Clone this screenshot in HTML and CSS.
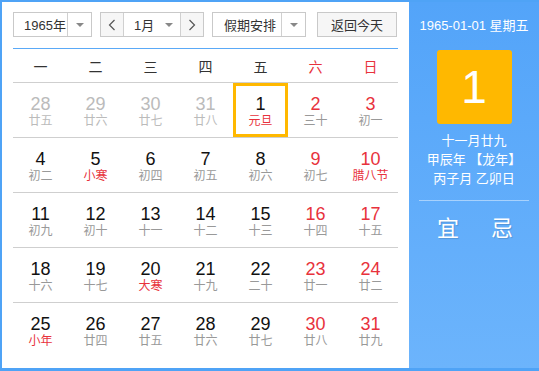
FILE: index.html
```html
<!DOCTYPE html>
<html lang="zh-CN">
<head>
<meta charset="utf-8">
<title>万年历</title>
<link rel="stylesheet" href="styles.css">
</head>
<body>
<div class="app">
  <div class="main">
    <div class="toolbar">
      <div class="select year">
        <span class="sel-text">1965年</span>
        <span class="sel-arrow divided"><i class="tri"></i></span>
      </div>
      <div class="month-group">
        <span class="nav-btn"><svg width="8" height="12" viewBox="0 0 8 12"><path d="M6.5 1 L1.5 6 L6.5 11" fill="none" stroke="#555" stroke-width="1.2"/></svg></span>
        <span class="month-sel"><span class="sel-text">1月</span><span class="sel-arrow"><i class="tri"></i></span></span>
        <span class="nav-btn"><svg width="8" height="12" viewBox="0 0 8 12"><path d="M1.5 1 L6.5 6 L1.5 11" fill="none" stroke="#555" stroke-width="1.2"/></svg></span>
      </div>
      <div class="select holiday">
        <span class="sel-text">假期安排</span>
        <span class="sel-arrow divided"><i class="tri"></i></span>
      </div>
      <div class="today-btn">返回今天</div>
    </div>
    <div class="weekdays">
      <span>一</span><span>二</span><span>三</span><span>四</span><span>五</span><span class="red">六</span><span class="red">日</span>
    </div>
    <div class="week">
      <div class="day other"><b>28</b><em>廿五</em></div>
      <div class="day other"><b>29</b><em>廿六</em></div>
      <div class="day other"><b>30</b><em>廿七</em></div>
      <div class="day other"><b>31</b><em>廿八</em></div>
      <div class="day today"><b>1</b><em class="fest">元旦</em></div>
      <div class="day wk"><b>2</b><em>三十</em></div>
      <div class="day wk"><b>3</b><em>初一</em></div>
    </div>
    <div class="week">
      <div class="day"><b>4</b><em>初二</em></div>
      <div class="day"><b>5</b><em class="fest">小寒</em></div>
      <div class="day"><b>6</b><em>初四</em></div>
      <div class="day"><b>7</b><em>初五</em></div>
      <div class="day"><b>8</b><em>初六</em></div>
      <div class="day wk"><b>9</b><em>初七</em></div>
      <div class="day wk"><b>10</b><em class="fest">腊八节</em></div>
    </div>
    <div class="week">
      <div class="day"><b>11</b><em>初九</em></div>
      <div class="day"><b>12</b><em>初十</em></div>
      <div class="day"><b>13</b><em>十一</em></div>
      <div class="day"><b>14</b><em>十二</em></div>
      <div class="day"><b>15</b><em>十三</em></div>
      <div class="day wk"><b>16</b><em>十四</em></div>
      <div class="day wk"><b>17</b><em>十五</em></div>
    </div>
    <div class="week">
      <div class="day"><b>18</b><em>十六</em></div>
      <div class="day"><b>19</b><em>十七</em></div>
      <div class="day"><b>20</b><em class="fest">大寒</em></div>
      <div class="day"><b>21</b><em>十九</em></div>
      <div class="day"><b>22</b><em>二十</em></div>
      <div class="day wk"><b>23</b><em>廿一</em></div>
      <div class="day wk"><b>24</b><em>廿二</em></div>
    </div>
    <div class="week last">
      <div class="day"><b>25</b><em class="fest">小年</em></div>
      <div class="day"><b>26</b><em>廿四</em></div>
      <div class="day"><b>27</b><em>廿五</em></div>
      <div class="day"><b>28</b><em>廿六</em></div>
      <div class="day"><b>29</b><em>廿七</em></div>
      <div class="day wk"><b>30</b><em>廿八</em></div>
      <div class="day wk"><b>31</b><em>廿九</em></div>
    </div>
  </div>
  <div class="side">
    <div class="side-date">1965-01-01 星期五</div>
    <div class="big-day">1</div>
    <div class="lunar">
      <div>十一月廿九</div>
      <div>甲辰年 【龙年】</div>
      <div>丙子月 乙卯日</div>
    </div>
    <div class="side-line"></div>
    <div class="yiji"><span>宜</span><span>忌</span></div>
  </div>
</div>
</body>
</html>
```

FILE: styles.css
```css
* { box-sizing: border-box; }
html, body { margin: 0; padding: 0; background: #fff; }
body {
  font-family: "Liberation Sans", "Noto Sans CJK SC", sans-serif;
  color: #333;
}
.app {
  width: 539px;
  height: 371px;
  display: flex;
  border: 2px solid #4fa3f6;
  border-right: 0;
  border-bottom-width: 3px;
  background: #4fa3f6;
}
.main {
  flex: 0 0 407px;
  background: #fff;
  padding: 10px 11px 0 11px;
}
.toolbar {
  display: flex;
  height: 25px;
  font-size: 13px;
  white-space: nowrap;
}
.select, .month-group, .today-btn {
  border: 1px solid #c9c9c9;
  background: #fff;
  display: flex;
  align-items: center;
}
.year { width: 79px; margin-right: 8px; }
.month-group { width: 104px; margin-right: 8px; }
.holiday { width: 94px; margin-right: 11px; }
.today-btn {
  width: 80px;
  justify-content: center;
  background: #f6f6f6;
  color: #333;
}
.sel-text { flex: 1; min-width: 0; padding-left: 10px; color: #333; white-space: nowrap; }
.holiday .sel-text { padding-left: 11px; }
.sel-arrow {
  flex: 0 0 24px;
  height: 100%;
  display: flex;
  align-items: center;
  justify-content: center;
}
.sel-arrow.divided { border-left: 1px solid #d0d0d0; }
.tri {
  width: 0; height: 0;
  border-left: 4px solid transparent;
  border-right: 4px solid transparent;
  border-top: 4px solid #888;
}
.nav-btn {
  flex: 0 0 22px;
  height: 100%;
  background: #f6f6f6;
  display: flex;
  align-items: center;
  justify-content: center;
}
.month-sel {
  flex: 1;
  min-width: 0;
  height: 100%;
  display: flex;
  align-items: center;
  border-left: 1px solid #d0d0d0;
  border-right: 1px solid #d0d0d0;
}
.month-sel .sel-text { padding-left: 10px; }
.month-sel .sel-arrow { flex: 0 0 22px; }

.weekdays {
  margin-top: 11px;
  border-top: 1px solid #5aa9f7;
  border-bottom: 1px solid #cfcfcf;
  height: 35px;
  display: grid;
  grid-template-columns: repeat(7, 1fr);
  align-items: center;
  text-align: center;
  font-size: 14px;
  color: #333;
}
.weekdays .red { color: #e8323c; }

.week {
  display: grid;
  grid-template-columns: repeat(7, 1fr);
  height: 55px;
  border-bottom: 1px solid #cfcfcf;
}
.week.last { border-bottom: 0; }
.day {
  display: flex;
  flex-direction: column;
  align-items: center;
  padding-top: 11px;
}
.day b {
  font-weight: normal;
  font-size: 18px;
  line-height: 20px;
  color: #111;
}
.day em {
  font-style: normal;
  font-size: 12px;
  line-height: 15px;
  color: #999;
}
.day.wk b { color: #e8323c; }
.day em.fest { color: #e8323c; }
.day.other b, .day.other em { color: #bbb; }
.day.today { box-shadow: inset 0 0 0 3px #ffb800; }

.side {
  flex: 1;
  background: linear-gradient(#53a4f9, #6cb4fc);
  color: #fff;
  display: flex;
  flex-direction: column;
  align-items: center;
  padding-top: 15px;
}
.side-date {
  font-size: 13px;
  line-height: 18px;
}
.big-day {
  margin-top: 15px;
  width: 75px;
  height: 74px;
  background: #ffb800;
  border-radius: 3px;
  font-size: 46px;
  line-height: 74px;
  text-align: center;
  color: #fff;
}
.lunar {
  margin-top: 7px;
  font-size: 13px;
  line-height: 19px;
  text-align: center;
}
.side-line {
  margin-top: 12px;
  width: 110px;
  height: 1px;
  background: rgba(255,255,255,0.45);
}
.yiji {
  margin-top: 15px;
  display: flex;
  gap: 32px;
  font-size: 22px;
  line-height: 26px;
  padding-left: 2px;
  text-shadow: 1px 1px 1px rgba(0,0,0,0.15);
}
```
